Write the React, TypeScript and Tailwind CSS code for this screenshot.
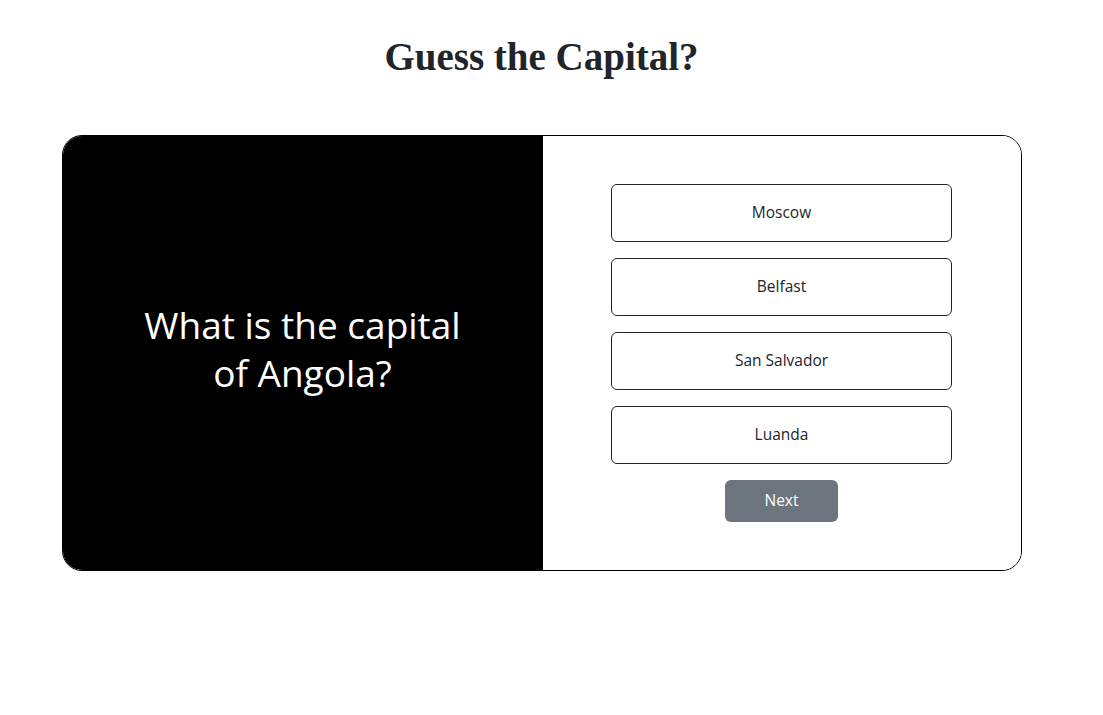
const options = ['Moscow', 'Belfast', 'San Salvador', 'Luanda']

function App() {
  return (
    <div className="min-h-screen w-[1083px] bg-white pt-[33px] font-['Open_Sans',sans-serif] text-[#212529]">
      <h1 className="text-center font-['Liberation_Serif',serif] text-[39px] font-bold leading-[48px]">
        Guess the Capital?
      </h1>

      <div className="mx-auto mt-[54px] flex h-[436px] w-[960px] overflow-hidden rounded-[20px] border border-black">
        <div className="flex w-[480px] items-center justify-center bg-black pb-2">
          <p className="w-[340px] text-center text-[37px] leading-[48px] text-white">
            What is the capital of Angola?
          </p>
        </div>

        <div className="flex flex-1 flex-col items-center justify-center gap-4 bg-white">
          {options.map((option) => (
            <button
              key={option}
              type="button"
              className="h-[58px] w-[341px] rounded-md border border-[#212529] bg-white text-[15.5px] text-[#212529]"
            >
              {option}
            </button>
          ))}
          <button
            type="button"
            className="h-[42px] w-[113px] rounded-md bg-[#6c757d] text-[15.5px] text-white"
          >
            Next
          </button>
        </div>
      </div>
    </div>
  )
}

export default App
